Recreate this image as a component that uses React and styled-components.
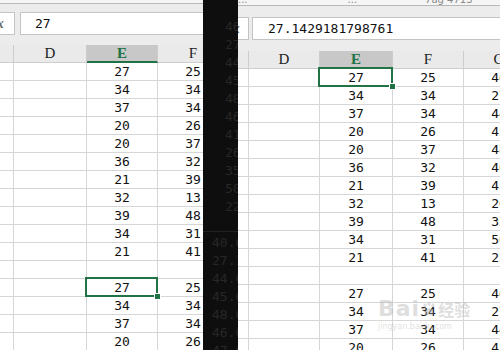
import React from 'react';
import styled, { createGlobalStyle, css } from 'styled-components';

const GREEN = '#217346';
const GRID = '#d6d6d6';
const MONO = '"DejaVu Sans Mono", "Liberation Mono", monospace';

const GlobalStyle = createGlobalStyle`
  html, body { margin: 0; padding: 0; background: #fff; }
  body { font-family: ${MONO}; }
`;

const Screen = styled.div`
  position: relative;
  width: 500px;
  height: 350px;
  overflow: hidden;
  display: flex;
  background: #fff;
`;

const Pane = styled.div`
  flex: 0 0 ${p => p.$width}px;
  width: ${p => p.$width}px;
  overflow: hidden;
  display: flex;
  flex-direction: column;
  background: #fff;
`;

const TopStrip = styled.div`
  flex: none;
  height: ${p => p.$h}px;
  background: #f5f5f5;
  border-bottom: 1px solid #b8b8b8;
  overflow: hidden;
  display: flex;
  align-items: flex-end;
  font: 10px "DejaVu Sans", sans-serif;
  color: #8a8a8a;
  white-space: nowrap;
`;

const StripText = styled.span`
  flex: none;
  line-height: 10px;
  height: 10px;
  margin-left: ${p => p.$ml}px;
`;

const FormulaBar = styled.div`
  flex: none;
  height: ${p => p.$h}px;
  box-sizing: border-box;
  padding-top: ${p => p.$padTop}px;
  background: #ececec;
  display: flex;
  align-items: flex-start;
  gap: ${p => p.$gap}px;
`;

const FxBox = styled.div`
  flex: none;
  width: ${p => p.$w}px;
  height: 23px;
  box-sizing: border-box;
  background: #fff;
  border: 1px solid #c4c4c4;
  border-left: none;
  overflow: hidden;
  display: flex;
  align-items: center;
  font: italic 700 14px "Liberation Serif", serif;
  color: #6a6a6a;
  white-space: nowrap;
`;

const FxText = styled.span`
  margin-left: ${p => p.$shift}px;
`;

const FormulaInput = styled.div`
  flex: none;
  width: 320px;
  height: 23px;
  box-sizing: border-box;
  background: #fff;
  border: 1px solid #c4c4c4;
  padding-left: ${p => p.$pad}px;
  display: flex;
  align-items: center;
  font-family: ${MONO};
  font-size: 13px;
  color: #111;
  white-space: nowrap;
`;

const GridRow = styled.div`
  flex: none;
  display: grid;
  grid-template-columns: ${p => p.$cols};
  height: 18px;
`;

const HeadCell = styled.div`
  box-sizing: border-box;
  height: 18px;
  background: ${p => (p.$active ? '#c8c8c8' : '#eaeaea')};
  border-right: 1px solid #cdcdcd;
  border-bottom: ${p => (p.$underline ? `2px solid ${GREEN}` : '1px solid #cdcdcd')};
  display: flex;
  align-items: center;
  justify-content: center;
  font-family: "Liberation Serif", "DejaVu Serif", serif;
  font-size: 15px;
  font-weight: ${p => (p.$active ? 700 : 400)};
  color: ${p => (p.$active ? GREEN : '#222')};
`;

const Cell = styled.div`
  position: relative;
  box-sizing: border-box;
  height: 18px;
  border-right: 1px solid ${GRID};
  border-bottom: 1px solid ${GRID};
  display: flex;
  align-items: center;
  justify-content: center;
  font-family: ${MONO};
  font-size: 13px;
  color: #111;
  ${p => p.$selected && css`
    &::after {
      content: '';
      position: absolute;
      top: -2px; left: -2px; right: -1px; bottom: -1px;
      border: 2px solid ${GREEN};
      z-index: 2;
    }
    &::before {
      content: '';
      position: absolute;
      right: -4px; bottom: -4px;
      width: 5px; height: 5px;
      background: ${GREEN};
      border: 1px solid #fff;
      z-index: 3;
    }
  `}
`;

const Band = styled.div`
  flex: 0 0 35px;
  background: #0e0e0e;
  display: flex;
  flex-direction: column;
  overflow: hidden;
  font-family: ${MONO};
  font-size: 13px;
  color: #272727;
  white-space: nowrap;
`;

const BandBlock = styled.div`
  flex: none;
  height: ${p => p.$h}px;
  box-sizing: border-box;
  padding-top: ${p => p.$top}px;
  padding-left: ${p => p.$pad}px;
  border-bottom: ${p => (p.$divider ? '1px solid #222' : 'none')};
  overflow: hidden;
`;

const GhostLine = styled.div`
  height: 18px;
  line-height: 18px;
`;

const Watermark = styled.div`
  position: absolute;
  left: 378px;
  top: 296px;
  pointer-events: none;
  color: rgba(175, 175, 175, 0.42);
  display: flex;
  flex-direction: column;
  align-items: flex-start;
`;

const WmTop = styled.div`
  display: flex;
  align-items: center;
  gap: 1px;
`;

const WmBai = styled.span`
  font: 700 22px "DejaVu Sans", sans-serif;
  letter-spacing: 1px;
`;

const WmCn = styled.span`
  font: 700 16px "Noto Sans CJK SC", sans-serif;
`;

const WmSub = styled.span`
  font: 8px "DejaVu Sans", sans-serif;
  margin-top: 1px;
`;

const E = ['27', '34', '37', '20', '20', '36', '21', '32', '39', '34', '21', '', '27', '34', '37', '20'];
const F = ['25', '34', '34', '26', '37', '32', '39', '13', '48', '31', '41', '', '25', '34', '34', '26'];
const G = ['46', '27', '44', '45', '48', '46', '41', '26', '35', '50', '22', '', '46', '27', '44', '45'];

function Sheet({ width, cols, stripH, strip, barH, barPad, fxW, fxShift, gap, inputPad, value, showG, selRow, underline }) {
  const colTpl = cols.map(c => `${c}px`).join(' ');
  const heads = ['', 'D', 'E', 'F'].concat(showG ? ['G'] : []);
  return (
    <Pane $width={width}>
      <TopStrip $h={stripH}>
        {strip.map((s, i) => (
          <StripText key={i} $ml={s.ml}>{s.t}</StripText>
        ))}
      </TopStrip>
      <FormulaBar $h={barH} $padTop={barPad} $gap={gap}>
        <FxBox $w={fxW}><FxText $shift={fxShift}>fx</FxText></FxBox>
        <FormulaInput $pad={inputPad}>{value}</FormulaInput>
      </FormulaBar>
      <GridRow $cols={colTpl}>
        {heads.map((h, i) => (
          <HeadCell key={i} $active={h === 'E'} $underline={h === 'E' && underline}>{h}</HeadCell>
        ))}
      </GridRow>
      {E.map((e, r) => (
        <GridRow key={r} $cols={colTpl}>
          <Cell />
          <Cell />
          <Cell $selected={r === selRow}>{e}</Cell>
          <Cell>{F[r]}</Cell>
          {showG && <Cell>{G[r]}</Cell>}
        </GridRow>
      ))}
    </Pane>
  );
}

export default function App() {
  return (
    <>
      <GlobalStyle />
      <Screen>
        <Sheet
          width={203}
          cols={[14, 73, 71, 71]}
          stripH={3}
          strip={[]}
          barH={41}
          barPad={8}
          fxW={15}
          fxShift={-8}
          gap={5}
          inputPad={14}
          value="27"
          selRow={12}
          underline
        />
        <Band>
          <BandBlock $h={232} $top={18} $pad={22} $divider>
            {['46', '27', '44', '45', '48', '46', '41', '26', '35', '50', '22'].map((t, i) => (
              <GhostLine key={i}>{t}</GhostLine>
            ))}
          </BandBlock>
          <BandBlock $h={118} $top={2} $pad={9}>
            {['40.0', '27.1', '44.0', '45.6', '48.0', '46.0', '47.0'].map((t, i) => (
              <GhostLine key={i}>{t}</GhostLine>
            ))}
          </BandBlock>
        </Band>
        <Sheet
          width={262}
          cols={[11, 71, 73, 71, 71]}
          stripH={5}
          strip={[{ t: '...', ml: 0 }, { t: '...', ml: 100 }, { t: '7ag 4713', ml: 68 }]}
          barH={45}
          barPad={11}
          fxW={11}
          fxShift={-10}
          gap={3}
          inputPad={15}
          value="27.1429181798761"
          selRow={0}
          showG
        />
        <Watermark>
          <WmTop>
            <WmBai>Bai</WmBai>
            <svg width="16" height="16" viewBox="0 0 16 16" aria-hidden="true">
              <g fill="currentColor">
                <ellipse cx="4" cy="4.5" rx="1.6" ry="2.1" />
                <ellipse cx="8" cy="2.8" rx="1.6" ry="2.1" />
                <ellipse cx="12" cy="4.5" rx="1.6" ry="2.1" />
                <ellipse cx="2.3" cy="8.6" rx="1.4" ry="1.8" />
                <path d="M8 7c-2.5 0-4.5 3.5-4.5 5.3 0 1.5 1.3 2.2 2.5 2.2 1 0 1.3-.5 2-.5s1 .5 2 .5c1.2 0 2.5-.7 2.5-2.2C12.5 10.5 10.5 7 8 7z" />
              </g>
            </svg>
            <WmCn>经验</WmCn>
          </WmTop>
          <WmSub>jingyan.baidu.com</WmSub>
        </Watermark>
      </Screen>
    </>
  );
}
